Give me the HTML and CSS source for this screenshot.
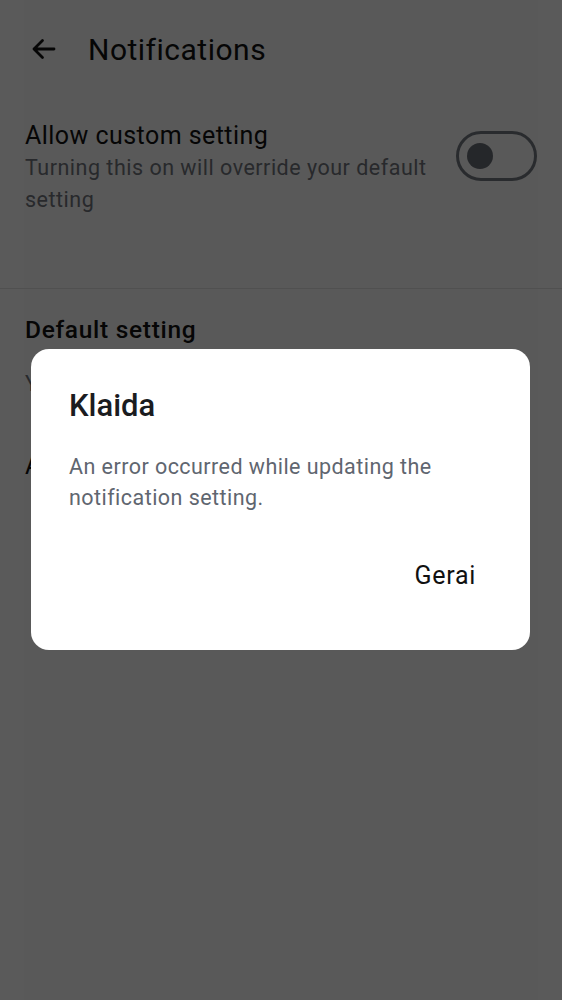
FILE: index.html
```html
<!DOCTYPE html>
<html lang="en">
<head>
<meta charset="utf-8">
<title>Notifications</title>
<link rel="stylesheet" href="styles.css">
</head>
<body>
<div class="page">
  <header class="appbar">
    <svg class="back" width="28" height="28" viewBox="0 0 28 28" aria-hidden="true">
      <path d="M25 14H5M13.5 5.5L5 14l8.5 8.5" fill="none" stroke="#111" stroke-width="2.8" stroke-linecap="round" stroke-linejoin="round"/>
    </svg>
    <h1 class="appbar-title">Notifications</h1>
  </header>

  <section class="row custom">
    <div class="row-text">
      <div class="row-title">Allow custom setting</div>
      <div class="row-sub">Turning this on will override your default setting</div>
    </div>
    <div class="switch"><span class="knob"></span></div>
  </section>

  <div class="divider"></div>

  <section class="defaults">
    <h2 class="section-title">Default setting</h2>
    <div class="row-sub">Your default setting applies to all notifications</div>
    <div class="row-title second">All notifications</div>
  </section>
</div>

<div class="scrim">
  <div class="dialog" role="alertdialog">
    <h3 class="dialog-title">Klaida</h3>
    <p class="dialog-body">An error occurred while updating the notification setting.</p>
    <div class="dialog-actions">
      <button class="dialog-btn">Gerai</button>
    </div>
  </div>
</div>
</body>
</html>
```

FILE: styles.css
```css
* { box-sizing: border-box; }

html, body {
  margin: 0;
  padding: 0;
  background: #ffffff;
  font-family: Roboto, "Noto Sans", "Liberation Sans", sans-serif;
  color: #111111;
}

.page {
  min-height: 1000px;
  margin: 0 24px;
  background: #fcfcfc;
}

.appbar {
  height: 100px;
  display: flex;
  align-items: center;
  padding-left: 5px;
}

.back {
  flex: none;
  margin-top: -2px;
}

.appbar-title {
  margin: 0 0 0 31px;
  font-size: 30px;
  font-weight: 400;
  letter-spacing: 0.5px;
  line-height: 40px;
  color: #111;
}

.row {
  display: flex;
  align-items: flex-start;
  padding: 20px 0 72px 1px;
}

.row-text { flex: 1; }

.row-title {
  font-size: 25px;
  line-height: 32px;
  letter-spacing: 0.45px;
  color: #111;
}

.row-sub {
  font-size: 21.5px;
  line-height: 32px;
  letter-spacing: 0.5px;
  color: #72767c;
  padding-right: 6px;
}

.switch {
  flex: none;
  width: 81px;
  height: 50px;
  margin-top: 11px;
  margin-right: 1px;
  border: 3px solid #767b82;
  border-radius: 25px;
  display: flex;
  align-items: center;
  padding-left: 8px;
}

.knob {
  width: 26px;
  height: 26px;
  border-radius: 50%;
  background: #6a6f77;
}

.divider {
  height: 1px;
  margin: 0 -24px;
  background: #e2e2e2;
}

.defaults {
  padding: 25px 0 0 1px;
}

.section-title {
  margin: 0;
  font-size: 24.5px;
  font-weight: 500;
  line-height: 32px;
  letter-spacing: 0.7px;
  color: #111;
}

.defaults .row-sub {
  margin-top: 22px;
}

.row-title.second {
  margin-top: 50px;
}

.scrim {
  position: fixed;
  inset: 0;
  background: rgba(0, 0, 0, 0.647);
  display: flex;
  align-items: center;
  justify-content: center;
}

.dialog {
  width: 499px;
  margin-left: -1px;
  margin-top: -2px;
  background: #ffffff;
  border-radius: 18px;
  padding: 39px 38px 50px 38px;
}

.dialog-title {
  margin: 0;
  font-size: 31px;
  font-weight: 500;
  line-height: 36px;
  color: #1b1c1f;
}

.dialog-body {
  margin: 27px 0 0 0;
  font-size: 21.5px;
  line-height: 31px;
  letter-spacing: 0.45px;
  color: #5f6670;
}

.dialog-actions {
  display: flex;
  justify-content: flex-end;
  margin-top: 39px;
}

.dialog-btn {
  border: 0;
  background: none;
  font-family: inherit;
  font-size: 25px;
  font-weight: 400;
  line-height: 48px;
  letter-spacing: 0.7px;
  color: #111;
  padding: 0 18px;
  margin-right: -2px;
}
```
